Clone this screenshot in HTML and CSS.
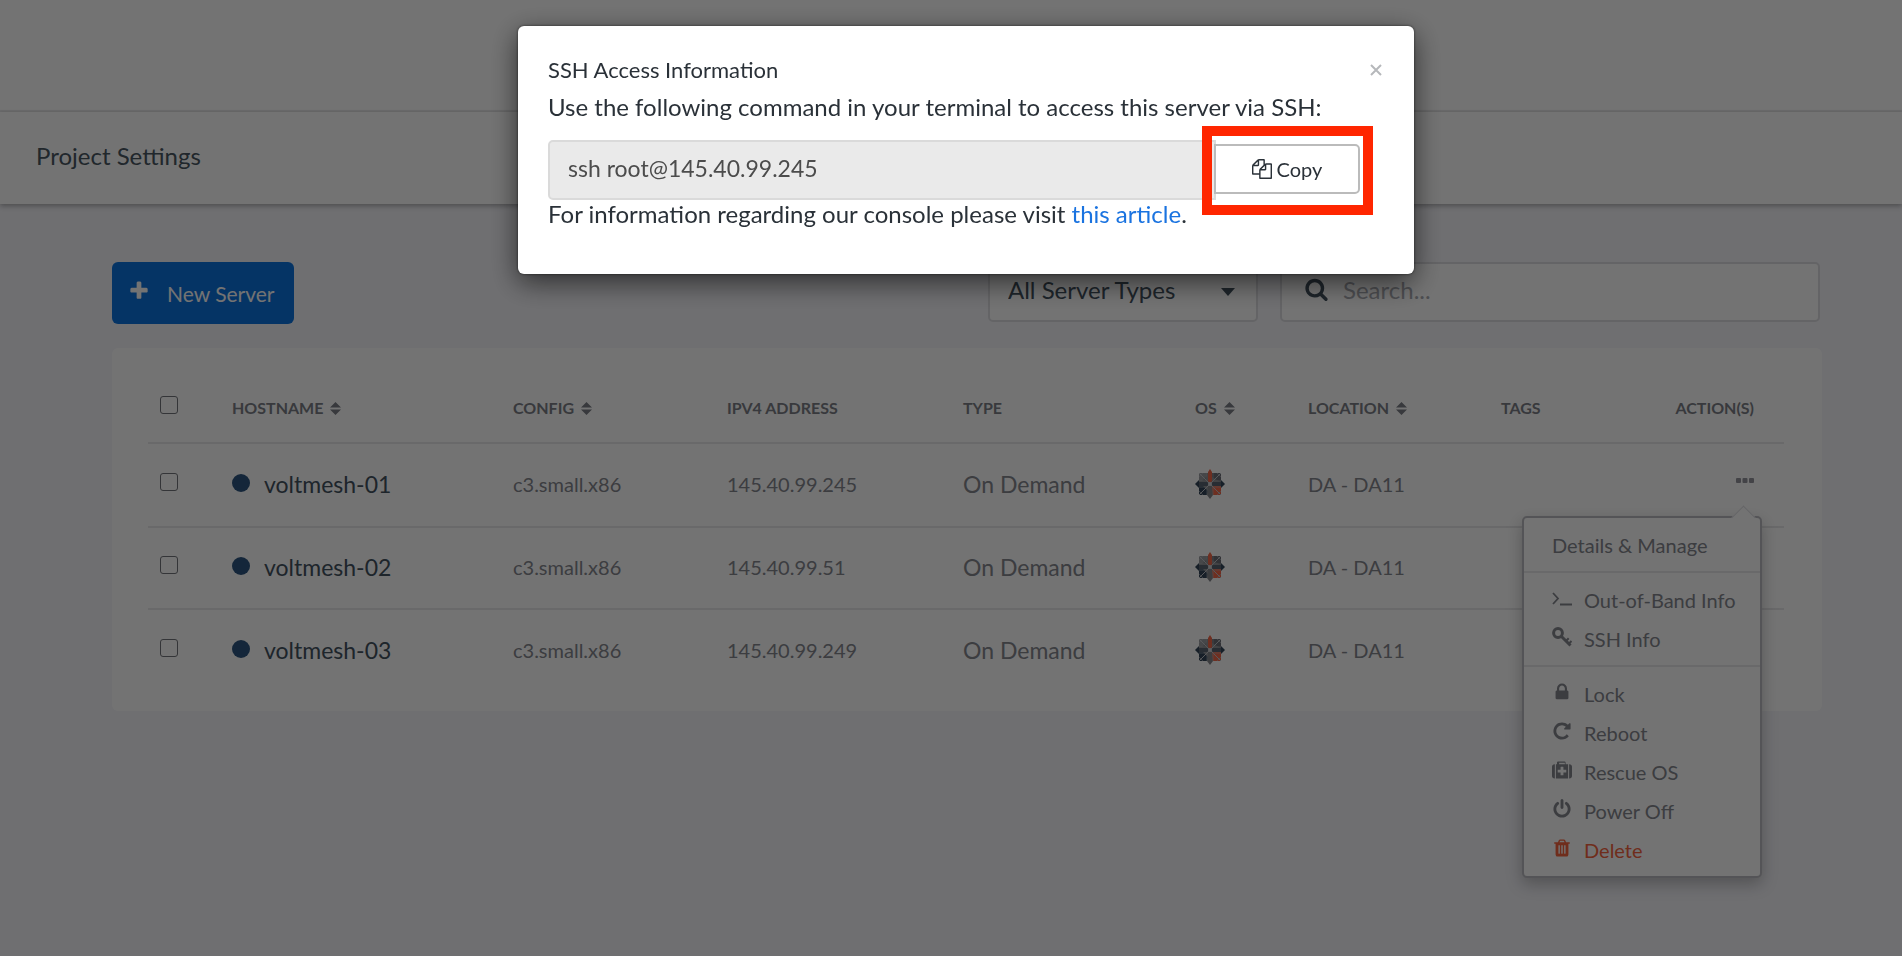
FILE: index.html
```html
<!DOCTYPE html>
<html lang="en">
<head>
  <meta charset="UTF-8">
  <meta name="viewport" content="width=device-width, initial-scale=1.0">
  <title>Servers</title>
  <link rel="stylesheet" href="styles.css">
</head>
<body>
  <!-- icon sprite -->
  <svg class="sprite" aria-hidden="true">
    <symbol id="plus" viewBox="0 0 1792 1792"><path d="M1600 736v192q0 40-28 68t-68 28h-416v416q0 40-28 68t-68 28h-192q-40 0-68-28t-28-68v-416h-416q-40 0-68-28t-28-68v-192q0-40 28-68t68-28h416v-416q0-40 28-68t68-28h192q40 0 68 28t28 68v416h416q40 0 68 28t28 68z"/></symbol>
    <symbol id="copy" viewBox="0 0 1792 1792"><path d="M1696 384q40 0 68 28t28 68v1216q0 40-28 68t-68 28h-960q-40 0-68-28t-28-68v-288h-544q-40 0-68-28t-28-68v-672q0-40 20-88t48-76l408-408q28-28 76-48t88-20h416q40 0 68 28t28 68v328q68-40 128-40h416zm-544 213l-299 299h299v-299zm-640-384l-299 299h299v-299zm196 647l316-316v-416h-384v416q0 40-28 68t-68 28h-416v640h512v-256q0-40 20-88t48-76zm956 804v-1152h-384v416q0 40-28 68t-68 28h-416v640h896z"/></symbol>
    <symbol id="search" viewBox="0 0 1792 1792"><path d="M1216 832q0-185-131.500-316.500t-316.500-131.500-316.500 131.500-131.500 316.500 131.500 316.500 316.500 131.500 316.500-131.500 131.500-316.500zm512 832q0 52-38 90t-90 38q-54 0-90-38l-343-342q-179 124-399 124-143 0-273.500-55.500t-225-150-150-225-55.500-273.500 55.500-273.500 150-225 225-150 273.500-55.500 273.500 55.500 225 150 150 225 55.500 273.500q0 220-124 399l343 343q37 37 37 90z"/></symbol>
    <symbol id="sort" viewBox="0 0 11 13"><path d="M5.500 0L11 5.500H0zM0 7.500H11L5.500 13z"/></symbol>
    <symbol id="caret" viewBox="0 0 14 8"><path d="M0 0H14L7 8z"/></symbol>
    <symbol id="dots" viewBox="0 0 18 5"><rect width="5" height="5" rx="1"/><rect x="6.500" width="5" height="5" rx="1"/><rect x="13" width="5" height="5" rx="1"/></symbol>
    <symbol id="terminal" viewBox="0 0 20 20"><path d="M1 5l5 5.500-5 5.500M8 16.500h12" fill="none" stroke="currentColor" stroke-width="1.800"/></symbol>
    <symbol id="key" viewBox="0 0 20 20"><path d="M9 9l9.500 9.500" fill="none" stroke="currentColor" stroke-width="3"/><path d="M13.500 14.500l3.200-3.200M16.500 17l3-3" fill="none" stroke="currentColor" stroke-width="2"/><circle cx="6" cy="6" r="4.400" fill="none" stroke="currentColor" stroke-width="3"/></symbol>
    <symbol id="lock" viewBox="0 0 1792 1792"><path d="M640 768h512v-192q0-106-75-181t-181-75-181 75-75 181v192zm832 96v576q0 40-28 68t-68 28h-960q-40 0-68-28t-28-68v-576q0-40 28-68t68-28h32v-192q0-184 132-316t316-132 316 132 132 316v192h32q40 0 68 28t28 68z"/></symbol>
    <symbol id="reboot" viewBox="0 0 1792 1792"><path d="M1664 256v448q0 26-19 45t-45 19h-448q-42 0-59-40-17-39 14-69l138-138q-148-137-349-137-104 0-198.500 40.500t-163.500 109.500-109.500 163.500-40.500 198.500 40.500 198.500 109.500 163.500 163.500 109.500 198.500 40.500q119 0 225-52t179-147q7-10 23-12 15 0 25 9l137 138q9 8 9.500 20.500t-7.500 22.500q-109 132-264 204.500t-327 72.500q-156 0-298-61t-245-164-164-245-61-298 61-298 164-245 245-164 298-61q147 0 284.500 55.500t244.500 156.500l130-129q29-31 70-14 39 17 39 59z"/></symbol>
    <symbol id="medkit" viewBox="0 0 1792 1792"><path d="M1280 1088v-192q0-14-9-23t-23-9h-224v-224q0-14-9-23t-23-9h-192q-14 0-23 9t-9 23v224h-224q-14 0-23 9t-9 23v192q0 14 9 23t23 9h224v224q0 14 9 23t23 9h192q14 0 23-9t9-23v-224h224q14 0 23-9t9-23zm-640-704h512v-128h-512v128zm-384 0v1280h-32q-92 0-158-66t-66-158v-832q0-92 66-158t158-66h32zm1184 0v1280h-1088v-1280h96v-160q0-40 28-68t68-28h576q40 0 68 28t28 68v160h96zm352 224v832q0 92-66 158t-158 66h-32v-1280h32q92 0 158 66t66 158z"/></symbol>
    <symbol id="power" viewBox="0 0 1792 1792"><path d="M1664 896q0 156-61 298t-164 245-245 164-298 61-298-61-245-164-164-245-61-298q0-182 80.500-343t226.500-270q43-32 95.500-25t83.500 50q32 42 24.500 94.500t-49.500 84.500q-98 74-151.500 181t-53.500 228q0 104 40.500 198.500t109.500 163.500 163.500 109.500 198.500 40.500 198.500-40.500 163.500-109.500 109.500-163.500 40.500-198.500q0-121-53.500-228t-151.500-181q-42-32-49.500-84.500t24.500-94.500q31-43 84-50t95 25q146 109 226.500 270t80.500 343zm-640-768v640q0 52-38 90t-90 38-90-38-38-90v-640q0-52 38-90t90-38 90 38 38 90z"/></symbol>
    <symbol id="trash" viewBox="0 0 1792 1792"><path d="M704 1376v-704q0-14-9-23t-23-9h-64q-14 0-23 9t-9 23v704q0 14 9 23t23 9h64q14 0 23-9t9-23zm256 0v-704q0-14-9-23t-23-9h-64q-14 0-23 9t-9 23v704q0 14 9 23t23 9h64q14 0 23-9t9-23zm256 0v-704q0-14-9-23t-23-9h-64q-14 0-23 9t-9 23v704q0 14 9 23t23 9h64q14 0 23-9t9-23zm-544-992h448l-48-117q-7-9-17-11h-317q-10 2-17 11zm928 32v64q0 14-9 23t-23 9h-96v948q0 83-47 143.500t-113 60.500h-832q-66 0-113-58.500t-47-141.500v-952h-96q-14 0-23-9t-9-23v-64q0-14 9-23t23-9h309l70-167q15-37 54-63t79-26h320q40 0 79 26t54 63l70 167h309q14 0 23 9t9 23z"/></symbol>
    <symbol id="centos" viewBox="0 0 30 30">
      <path d="M4 4h22v22H4z" fill="#85878d"/>
      <path d="M4 4h8v3l-5 5H4z" fill="#9b9da3"/>
      <path d="M17 4h9v9l-9-5z" fill="#6d7078"/>
      <path d="M4 17h4l5 5v4H4z" fill="#33465a"/>
      <path d="M17 17h9v9h-9z" fill="#f4694a"/>
      <path d="M15 0l2 3v9l-2 2-2-2V3z" fill="#f4694a"/>
      <path d="M0 15l4-4v8zM30 15l-4-4v8z" fill="#33465a"/>
      <path d="M4 13h8l2 2-2 2H4zM26 13h-8l-2 2 2 2h8z" fill="#5a6472"/>
      <path d="M15 30l-3-4 1-8 2-2 2 2 1 8z" fill="#85878d"/>
      <path d="M4 4l22 22M26 4L4 26" fill="none" stroke="#c4c5c9" stroke-width="1"/>
      <path d="M8 4l-4 4M22 4l4 4M4 22l4 4M26 22l-4 4M12 4v8H4M18 4v8h8M12 26v-8H4M18 26v-8h8" fill="none" stroke="#b4b5ba" stroke-width="0.600"/>
      <circle cx="15" cy="15" r="2" fill="#d4d5d8"/>
    </symbol>
  </svg>

  <header class="topbar"></header>
  <nav class="subnav">
    <a href="#">Project Settings</a>
  </nav>

  <main class="content">
    <div class="toolbar">
      <button class="new-server" type="button"><svg><use href="#plus"/></svg>New Server</button>
      <div class="filters">
        <div class="type-select">
          <select aria-label="Server type">
            <option>All Server Types</option>
          </select>
          <svg><use href="#caret"/></svg>
        </div>
        <label class="search">
          <svg><use href="#search"/></svg>
          <input type="search" placeholder="Search..." aria-label="Search">
        </label>
      </div>
    </div>

    <div class="card">
      <table class="servers">
        <colgroup>
          <col class="col-check"><col class="col-host"><col class="col-config"><col class="col-ip">
          <col class="col-type"><col class="col-os"><col class="col-location"><col class="col-tags"><col class="col-actions">
        </colgroup>
        <thead>
          <tr>
            <th class="check"><input type="checkbox" aria-label="Select all"></th>
            <th>HOSTNAME <svg><use href="#sort"/></svg></th>
            <th>CONFIG <svg><use href="#sort"/></svg></th>
            <th>IPV4 ADDRESS</th>
            <th>TYPE</th>
            <th>OS <svg><use href="#sort"/></svg></th>
            <th>LOCATION <svg><use href="#sort"/></svg></th>
            <th>TAGS</th>
            <th class="actions">ACTION(S)</th>
          </tr>
        </thead>
        <tbody>
          <tr>
            <td class="check"><input type="checkbox" aria-label="Select voltmesh-01"></td>
            <td><a class="host" href="#">voltmesh-01</a></td>
            <td>c3.small.x86</td>
            <td>145.40.99.245</td>
            <td class="type">On Demand</td>
            <td><svg class="os"><use href="#centos"/></svg></td>
            <td>DA - DA11</td>
            <td></td>
            <td class="actions">
              <button class="more" type="button" aria-label="Actions"><svg><use href="#dots"/></svg></button>
              <div class="menu">
                <div class="group"><a href="#">Details &amp; Manage</a></div>
                <div class="group">
                  <a href="#"><svg><use href="#terminal"/></svg>Out-of-Band Info</a>
                  <a href="#"><svg><use href="#key"/></svg>SSH Info</a>
                </div>
                <div class="group">
                  <a href="#"><svg><use href="#lock"/></svg>Lock</a>
                  <a href="#"><svg><use href="#reboot"/></svg>Reboot</a>
                  <a href="#"><svg><use href="#medkit"/></svg>Rescue OS</a>
                  <a href="#"><svg><use href="#power"/></svg>Power Off</a>
                  <a class="delete" href="#"><svg><use href="#trash"/></svg>Delete</a>
                </div>
              </div>
            </td>
          </tr>
          <tr>
            <td class="check"><input type="checkbox" aria-label="Select voltmesh-02"></td>
            <td><a class="host" href="#">voltmesh-02</a></td>
            <td>c3.small.x86</td>
            <td>145.40.99.51</td>
            <td class="type">On Demand</td>
            <td><svg class="os"><use href="#centos"/></svg></td>
            <td>DA - DA11</td>
            <td></td>
            <td></td>
          </tr>
          <tr>
            <td class="check"><input type="checkbox" aria-label="Select voltmesh-03"></td>
            <td><a class="host" href="#">voltmesh-03</a></td>
            <td>c3.small.x86</td>
            <td>145.40.99.249</td>
            <td class="type">On Demand</td>
            <td><svg class="os"><use href="#centos"/></svg></td>
            <td>DA - DA11</td>
            <td></td>
            <td></td>
          </tr>
        </tbody>
      </table>
    </div>
  </main>

  <div class="overlay">
    <div class="modal" role="dialog" aria-labelledby="modal-title">
      <div class="modal-header">
        <h2 id="modal-title">SSH Access Information</h2>
        <button class="close" type="button" aria-label="Close"><svg viewBox="0 0 12 12"><path d="M1 1l10 10M11 1L1 11"/></svg></button>
      </div>
      <label for="command">Use the following command in your terminal to access this server via SSH:</label>
      <div class="command">
        <input id="command" type="text" value="ssh root@145.40.99.245" readonly>
        <div class="copy-wrap">
          <button class="copy" type="button"><svg><use href="#copy"/></svg>Copy</button>
        </div>
      </div>
      <p>For information regarding our console please visit <a href="#">this article</a>.</p>
    </div>
  </div>
</body>
</html>
```
FILE: styles.css
```css
* {
  margin: 0;
  padding: 0;
  box-sizing: border-box;
}

body {
  min-height: 100vh;
  font-family: Lato, "Liberation Sans", sans-serif;
  font-size: 20px;
  color: #85878f;
  background-color: #f5f5fa;
}

a {
  color: inherit;
  text-decoration: none;
}

button,
input,
select {
  font-family: inherit;
}

svg {
  fill: currentColor;
}

.sprite {
  position: absolute;
  width: 0;
  height: 0;
}

.topbar {
  height: 112px;
  background-color: #fff;
  border-bottom: 2px solid #ececee;
}

.subnav {
  display: flex;
  align-items: center;
  height: 92px;
  padding: 0 36px 6px;
  font-size: 24px;
  color: #4a5763;
  background-color: #fff;
  box-shadow: 0 2px 5px rgba(0, 0, 0, 0.3);
}

.content {
  padding: 58px 80px 40px 112px;
}

.toolbar {
  display: flex;
  justify-content: space-between;
  align-items: flex-start;
  margin-bottom: 24px;
}

.new-server {
  display: flex;
  align-items: center;
  gap: 17px;
  height: 62px;
  padding: 0 20px 0 16px;
  font-size: 21px;
  color: #fff;
  background-color: #0d73df;
  border: none;
  border-radius: 6px;
  cursor: pointer;
}

.new-server svg {
  width: 22px;
  height: 22px;
  margin-bottom: 4px;
}

.filters {
  display: flex;
  gap: 22px;
  padding-right: 2px;
}

.type-select {
  position: relative;
  width: 270px;
}

.type-select select {
  width: 100%;
  height: 60px;
  padding: 0 18px 6px;
  font-size: 24px;
  color: #43525f;
  background-color: #fff;
  border: 2px solid #dedee2;
  border-radius: 5px;
  appearance: none;
}

.type-select svg {
  position: absolute;
  top: 26px;
  right: 23px;
  width: 14px;
  height: 8px;
  color: #43525f;
  pointer-events: none;
}

.search {
  display: flex;
  align-items: center;
  gap: 14px;
  width: 540px;
  height: 60px;
  padding: 0 22px 6px;
  background-color: #fff;
  border: 2px solid #dedee2;
  border-radius: 5px;
}

.search svg {
  width: 25px;
  height: 24px;
  color: #43525f;
}

.search input {
  flex: 1;
  font-size: 24px;
  background: none;
  border: none;
  outline: none;
}

.search input::placeholder {
  color: #a9abb2;
}

.card {
  padding: 0 38px 20px 36px;
  background-color: #fff;
  border-radius: 6px;
}

.servers {
  width: 100%;
  table-layout: fixed;
  border-collapse: collapse;
}

.col-check { width: 84px; }
.col-host { width: 281px; }
.col-config { width: 214px; }
.col-ip { width: 236px; }
.col-type { width: 232px; }
.col-os { width: 113px; }
.col-location { width: 193px; }
.col-tags { width: 110px; }
.col-actions { width: 173px; }

.servers th {
  height: 95px;
  padding-top: 24px;
  font-size: 16px;
  text-align: left;
  white-space: nowrap;
  color: #7c7f87;
}

.servers th svg {
  width: 11px;
  height: 13px;
  margin-left: 3px;
  vertical-align: -1px;
}

.servers td {
  position: relative;
  height: 82px;
  padding-bottom: 2px;
}

.servers tbody tr:first-child td {
  height: 84px;
}

.servers tr {
  border-bottom: 2px solid #e8e8ea;
}

.servers tbody tr:last-child {
  border-bottom: none;
}

.servers .check {
  padding-left: 12px;
}

.servers .actions {
  padding-right: 30px;
  text-align: right;
}

.servers input {
  display: block;
  width: 18px;
  height: 18px;
  margin-bottom: 4px;
  background-color: #fff;
  border: 1px solid #74767c;
  border-radius: 3px;
  appearance: none;
}

.host {
  display: flex;
  align-items: center;
  gap: 14px;
  font-size: 23px;
  color: #43525f;
}

.host::before {
  content: "";
  width: 18px;
  height: 18px;
  margin-bottom: 2px;
  background-color: #2e5680;
  border-radius: 50%;
}

.type {
  font-size: 23px;
}

.os {
  display: block;
  width: 30px;
  height: 30px;
}

.more {
  display: block;
  margin: 0 0 8px auto;
  color: #94969d;
  background: none;
  border: none;
  cursor: pointer;
}

.more svg {
  display: block;
  width: 18px;
  height: 5px;
}

.menu {
  position: absolute;
  top: 72px;
  right: 22px;
  z-index: 1;
  width: 240px;
  text-align: left;
  background-color: #fff;
  border: 2px solid #bbbbc0;
  border-radius: 5px;
  box-shadow: 0 6px 16px rgba(0, 0, 0, 0.25);
}

/* little arrow that points at the dots */
.menu::before {
  content: "";
  position: absolute;
  top: -9px;
  right: 8px;
  width: 16px;
  height: 16px;
  background-color: #fff;
  border: solid #e0e0e4;
  border-width: 1px 0 0 1px;
  transform: rotate(45deg);
}

.menu .group {
  position: relative;
  padding: 7px 0;
  border-bottom: 2px solid #e8e8ea;
}

.menu .group:last-child {
  border-bottom: none;
}

.menu a {
  display: flex;
  align-items: center;
  gap: 12px;
  height: 39px;
  padding-left: 28px;
  white-space: nowrap;
}

.menu svg {
  width: 20px;
  height: 20px;
  margin-bottom: 3px;
}

.menu .delete {
  color: #f7653f;
}

.overlay {
  position: fixed;
  inset: 0;
  z-index: 2;
  padding: 26px 0 0 30px;
  background-color: rgba(0, 0, 0, 0.55);
}

.modal {
  max-width: 896px;
  margin: 0 auto;
  padding: 29px 30px 45px;
  font-size: 24px;
  line-height: 30px;
  color: #2a3138;
  background-color: #fff;
  border-radius: 6px;
  box-shadow: 0 0 3px rgba(0, 0, 0, 0.6), 0 8px 28px rgba(0, 0, 0, 0.6);
}

.modal-header {
  display: flex;
  justify-content: space-between;
  align-items: center;
}

.modal h2 {
  font-size: 22px;
  font-weight: normal;
}

.modal label {
  display: block;
  margin: 7px 0 18px;
}

.close {
  width: 16px;
  height: 16px;
  padding: 2px;
  background: none;
  border: none;
  cursor: pointer;
}

.close svg {
  display: block;
  fill: none;
  stroke: #b6b8bb;
  stroke-width: 2;
}

.command {
  display: flex;
  align-items: flex-start;
}

.command input {
  flex: 1;
  height: 60px;
  padding: 0 18px 4px;
  font-size: 23px;
  color: #4c4c4c;
  background-color: #eaeaea;
  border: 2px solid #dadada;
  border-radius: 5px 0 0 5px;
  outline: none;
}

.copy-wrap {
  position: relative;
  margin: 4px 24px 0 -2px;
}

/* red frame around the copy button */
.copy-wrap::after {
  content: "";
  position: absolute;
  inset: -18px -13px -21px -12px;
  border: 10px solid #ff2600;
  pointer-events: none;
}

.copy {
  display: flex;
  justify-content: center;
  align-items: center;
  gap: 5px;
  width: 146px;
  height: 50px;
  font-size: 20px;
  color: #2a3138;
  background-color: #fff;
  border: 2px solid #bbb;
  border-radius: 0 5px 5px 0;
  cursor: pointer;
}

.copy svg {
  width: 20px;
  height: 20px;
}

.modal p {
  margin-top: -1px;
}

.modal p a {
  color: #1a73e0;
}
```
